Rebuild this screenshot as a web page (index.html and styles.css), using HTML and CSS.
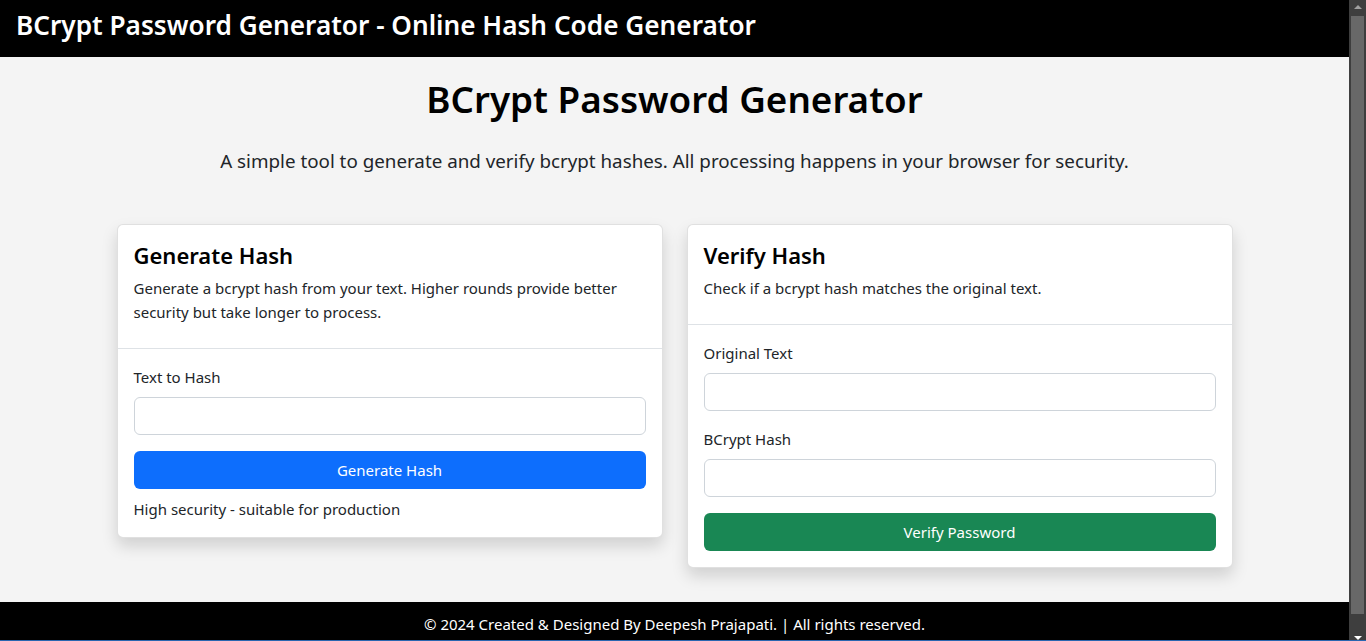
FILE: index.html
```html
<!DOCTYPE html>
<html lang="en">
<head>
<meta charset="utf-8">
<title>BCrypt Password Generator - Online Hash Code Generator</title>
<link rel="stylesheet" href="styles.css">
</head>
<body>
<div class="page">
  <header class="topbar">
    <h1 class="brand">BCrypt Password Generator - Online Hash Code Generator</h1>
  </header>
  <main class="container">
    <h2 class="title">BCrypt Password Generator</h2>
    <p class="lead">A simple tool to generate and verify bcrypt hashes. All processing happens in your browser for security.</p>
    <div class="cards">
      <section class="card">
        <div class="card-header">
          <h3 class="card-title">Generate Hash</h3>
          <p class="card-desc">Generate a bcrypt hash from your text. Higher rounds provide better security but take longer to process.</p>
        </div>
        <div class="card-body">
          <label class="label">Text to Hash</label>
          <input class="input" type="text">
          <button class="btn btn-blue">Generate Hash</button>
          <p class="note">High security - suitable for production</p>
        </div>
      </section>
      <section class="card">
        <div class="card-header">
          <h3 class="card-title">Verify Hash</h3>
          <p class="card-desc">Check if a bcrypt hash matches the original text.</p>
        </div>
        <div class="card-body">
          <label class="label">Original Text</label>
          <input class="input" type="text">
          <label class="label">BCrypt Hash</label>
          <input class="input" type="text">
          <button class="btn btn-green">Verify Password</button>
        </div>
      </section>
    </div>
  </main>
  <footer class="footer">
    <p>© 2024 Created &amp; Designed By Deepesh Prajapati. | All rights reserved.</p>
  </footer>
</div>
<div class="scrollbar">
  <div class="sb-arrow sb-up"></div>
  <div class="sb-thumb"></div>
  <div class="sb-arrow sb-down"></div>
</div>
</body>
</html>
```
FILE: styles.css
```css
* { box-sizing: border-box; }
html, body { height: 100%; }
body {
  margin: 0;
  display: flex;
  height: 100vh;
  overflow: hidden;
  background: #f4f4f4;
  font-family: "Noto Sans", "Open Sans", sans-serif;
  color: #212529;
  border-bottom: 1px solid #2a66b0;
}
.page {
  flex: 1;
  min-width: 0;
  overflow: hidden;
  background: #f4f4f4;
}
.topbar {
  background: #000;
  height: 57px;
  padding: 0 16px 6px;
  display: flex;
  align-items: center;
}
.brand {
  margin: 0;
  color: #fff;
  font-size: 26.2px;
  font-weight: 600;
  line-height: 1.2;
  white-space: nowrap;
}
.container {
  width: 1116px;
  margin: 0 auto;
  padding: 18px 0 34px;
}
.title {
  margin: 0 0 23px;
  text-align: center;
  font-size: 36.8px;
  font-weight: 600;
  line-height: 48px;
  color: #000;
}
.lead {
  margin: 0 0 48px;
  text-align: center;
  font-size: 18.8px;
  line-height: 30px;
  font-weight: 400;
}
.cards {
  display: grid;
  grid-template-columns: 1fr 1fr;
  gap: 24px;
  align-items: start;
}
.card {
  background: #fff;
  border: 1px solid rgba(0,0,0,.12);
  border-radius: 6px;
  box-shadow: 0 8px 16px rgba(0,0,0,.15);
}
.card-header {
  padding: 16px 16px 24px;
  border-bottom: 1px solid #dee2e6;
}
.card-title {
  margin: 0 0 6px;
  font-size: 22px;
  font-weight: 600;
  line-height: 28.8px;
  color: #000;
}
.card-desc {
  margin: 0;
  font-size: 15px;
  line-height: 24px;
}
.card-body {
  padding: 16px;
  display: flex;
  flex-direction: column;
}
.label {
  display: block;
  font-size: 15px;
  line-height: 24px;
  margin-bottom: 8px;
}
.input {
  display: block;
  width: 100%;
  height: 38px;
  border: 1px solid #ced4da;
  border-radius: 6px;
  background: #fff;
  margin: 0 0 16px;
  font: inherit;
}
.btn {
  display: block;
  width: 100%;
  height: 38px;
  border: 0;
  border-radius: 6px;
  color: #fff;
  font-family: inherit;
  font-size: 15px;
  line-height: 24px;
  padding: 0;
}
.btn-blue { background: #0d6efd; }
.btn-green { background: #198754; }
.note {
  margin: 8px 0 0;
  font-size: 15px;
  line-height: 24px;
}
.footer {
  background: #000;
  color: #fff;
  padding: 10px 16px 16px;
  text-align: center;
}
.footer p {
  margin: 0;
  font-size: 15px;
  line-height: 24px;
}
.scrollbar {
  width: 17px;
  flex: none;
  background: #3e3e3e;
  display: flex;
  flex-direction: column;
  align-items: center;
  padding: 0 2px;
}
.sb-arrow {
  height: 16px;
  width: 100%;
  position: relative;
}
.sb-up::after, .sb-down::after {
  content: "";
  position: absolute;
  left: 50%;
  transform: translateX(-50%);
  border-left: 4px solid transparent;
  border-right: 4px solid transparent;
}
.sb-up::after { top: 5px; border-bottom: 4px solid #a0a0a0; }
.sb-down::after { top: 12px; border-top: 4px solid #ffffff; }
.sb-thumb {
  flex: 1;
  width: 100%;
  background: #686868;
  margin-bottom: 10px;
}
```
